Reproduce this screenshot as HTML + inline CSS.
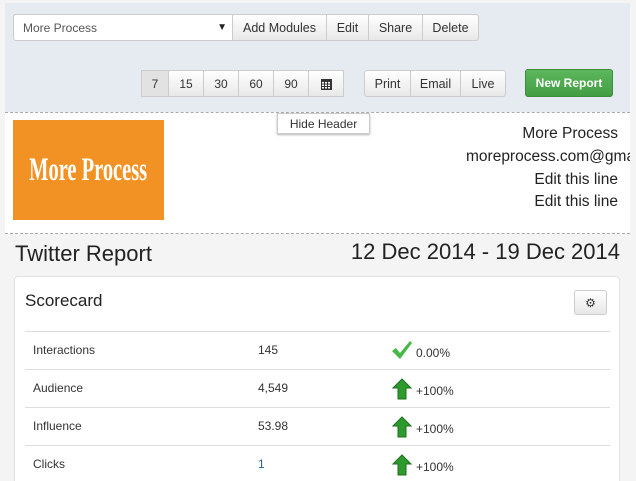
<!DOCTYPE html>
<html><head><meta charset="utf-8"><style>
*{box-sizing:border-box;margin:0;padding:0}
html,body{width:636px;height:481px;overflow:hidden}
body{background:#f4f4f4;font-family:"Liberation Sans",sans-serif;position:relative;color:#333}
.abs{position:absolute}
.top{left:5px;top:3px;width:625px;height:109px;background:#e5ebf1}
.btn{position:absolute;height:27px;border:1px solid #ccc;background:linear-gradient(#fff,#e8e8e8);font-size:12.5px;color:#333;display:flex;align-items:center;justify-content:center}
.hdr{left:5px;top:112px;width:625px;height:122px;background:#fff;border-top:1px dashed #aaa;border-bottom:1px dashed #aaa;overflow:hidden}
.rt{position:absolute;right:12px;font-size:15.5px;color:#222;white-space:nowrap;text-align:right}
.panel{left:14px;top:276px;width:606px;height:220px;background:#fff;border:1px solid #e2e2e2;border-radius:4px}
.row{position:absolute;left:10px;width:585px;height:38px;border-top:1px solid #ddd;font-size:12px;color:#333}
.row span{position:absolute;top:11px}
</style></head><body>
<div class="abs top"></div>
<div class="btn" style="left:13px;top:14px;width:220px;justify-content:space-between;padding:0 5px 0 9px;background:#fff;border-radius:3px 0 0 3px;color:#555;font-size:12px"><span>More Process</span><span style="font-size:10px;color:#222">▼</span></div>
<div class="btn" style="left:232px;top:14px;width:95px">Add Modules</div>
<div class="btn" style="left:326px;top:14px;width:43px">Edit</div>
<div class="btn" style="left:368px;top:14px;width:55px">Share</div>
<div class="btn" style="left:422px;top:14px;width:57px;border-radius:0 3px 3px 0">Delete</div>
<div class="btn" style="left:141px;top:70px;width:28px;background:#e2e2e2;font-size:12px">7</div>
<div class="btn" style="left:168px;top:70px;width:36px;font-size:12px">15</div>
<div class="btn" style="left:203px;top:70px;width:36px;font-size:12px">30</div>
<div class="btn" style="left:238px;top:70px;width:36px;font-size:12px">60</div>
<div class="btn" style="left:273px;top:70px;width:36px;font-size:12px">90</div>
<div class="btn" style="left:308px;top:70px;width:36px"><svg width="11" height="12" viewBox="0 0 11 12"><rect x="0" y="1" width="11" height="11" fill="#333"/><g fill="#fff"><rect x="1" y="4" width="2" height="1.5"/><rect x="4" y="4" width="2" height="1.5"/><rect x="7" y="4" width="2" height="1.5"/><rect x="1" y="6.5" width="2" height="1.5"/><rect x="4" y="6.5" width="2" height="1.5"/><rect x="7" y="6.5" width="2" height="1.5"/><rect x="1" y="9" width="2" height="1.5"/><rect x="4" y="9" width="2" height="1.5"/><rect x="7" y="9" width="2" height="1.5"/></g></svg></div>
<div class="btn" style="left:364px;top:70px;width:47px;border-radius:3px 0 0 3px">Print</div>
<div class="btn" style="left:410px;top:70px;width:51px">Email</div>
<div class="btn" style="left:460px;top:70px;width:46px;border-radius:0 3px 3px 0">Live</div>
<div class="btn" style="left:525px;top:69px;width:88px;height:28px;background:linear-gradient(#5cb85c,#449d44);border-color:#3d8b3d;color:#fff;font-weight:bold;font-size:12px;border-radius:3px">New Report</div>
<div class="abs hdr">
<div class="abs" style="left:8px;top:7px;width:151px;height:100px;background:#f39224;color:#fff;font-family:'Liberation Serif',serif;font-weight:bold;font-size:33px;display:flex;align-items:center;justify-content:center;white-space:nowrap"><span style="display:inline-block;transform:scaleX(.62)">More Process</span></div>
<div class="rt" style="top:12px">More Process</div>
<div class="rt" style="top:35px;left:461px;right:auto">moreprocess.com@gmail.com</div>
<div class="rt" style="top:58px">Edit this line</div>
<div class="rt" style="top:80px">Edit this line</div>
</div>
<div class="btn" style="left:277px;top:113px;width:93px;height:21px;background:#fff;font-size:12px;box-shadow:0 1px 2px rgba(0,0,0,.3)">Hide Header</div>
<div class="abs" style="left:15px;top:241px;font-size:22px;color:#222">Twitter Report</div>
<div class="abs" style="right:16px;top:239px;font-size:22px;color:#222">12 Dec 2014 - 19 Dec 2014</div>
<div class="abs panel">
<div class="abs" style="left:10px;top:14px;font-size:17px;color:#222">Scorecard</div>
<div class="btn" style="left:559px;top:13px;width:33px;height:25px;border-radius:3px;font-size:12px">⚙</div>
<div class="row" style="top:54px"><span style="left:8px">Interactions</span><span style="left:233px">145</span><span style="left:366px;top:8px"><svg width="22" height="20" viewBox="0 0 22 20"><path d="M1 11l4-3 4 5L19 1l2 2-12 16z" fill="#45b745"/></svg></span><span style="left:391px;top:14px">0.00%</span></div>
<div class="row" style="top:92px"><span style="left:8px">Audience</span><span style="left:233px">4,549</span><span style="left:367px;top:8px"><svg width="20" height="22" viewBox="0 0 20 22"><path d="M10 1l9 9h-5v11H6V10H1z" fill="#2c9a2c" stroke="#1f6f1f"/></svg></span><span style="left:391px;top:14px">+100%</span></div>
<div class="row" style="top:130px"><span style="left:8px">Influence</span><span style="left:233px">53.98</span><span style="left:367px;top:8px"><svg width="20" height="22" viewBox="0 0 20 22"><path d="M10 1l9 9h-5v11H6V10H1z" fill="#2c9a2c" stroke="#1f6f1f"/></svg></span><span style="left:391px;top:14px">+100%</span></div>
<div class="row" style="top:168px"><span style="left:8px">Clicks</span><span style="left:233px;color:#2a6496">1</span><span style="left:367px;top:8px"><svg width="20" height="22" viewBox="0 0 20 22"><path d="M10 1l9 9h-5v11H6V10H1z" fill="#2c9a2c" stroke="#1f6f1f"/></svg></span><span style="left:391px;top:14px">+100%</span></div>
</div>
</body></html>
